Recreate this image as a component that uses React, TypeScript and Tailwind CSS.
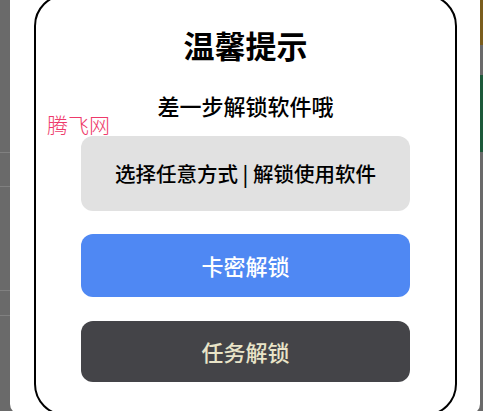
import * as React from "react";

const cjk = { fontFamily: '"Noto Sans CJK SC", "Noto Sans", sans-serif' };

function LeftEdge() {
  return (
    <div className="flex w-[10px] shrink-0 flex-col bg-[#6a6a6a]">
      <div className="h-[153px] border-b border-[#808080]" />
      <div className="h-[34px] border-b border-[#808080]" />
      <div className="h-[104px] border-b border-[#808080]" />
      <div className="h-[25px] border-b border-[#808080]" />
    </div>
  );
}

function RightEdge() {
  return (
    <div className="flex w-[3px] shrink-0 flex-col bg-[#6a6a6a]">
      <div className="h-[45px] bg-[#7a5d1c]" />
      <div className="h-[30px]" />
      <div className="h-[77px] bg-[#1d5a3a]" />
    </div>
  );
}

export default function App() {
  return (
    <div
      className="relative flex h-[411px] w-[483px] overflow-hidden bg-[#6a6a6a]"
      style={cjk}
    >
      <LeftEdge />

      {/* Sheet */}
      <div className="flex h-[414px] flex-1 justify-center rounded-b-[10px] bg-white pl-[24px] pr-[23px]">
        <div className="mt-[-6px] flex h-[422px] w-full flex-col items-center rounded-[32px] border-2 border-black px-[45px] pt-[34px]">
          <h1 className="h-[30px] text-[31px] font-bold leading-[30px] text-black">
            温馨提示
          </h1>
          <p className="mt-[34px] h-[22px] text-[22px] font-medium leading-[22px] text-black">
            差一步解锁软件哦
          </p>

          <div className="mt-[20px] flex h-[75px] w-full items-center justify-center rounded-[12px] bg-[#e1e1e1] text-[20.5px] font-medium text-black">
            选择任意方式 | 解锁使用软件
          </div>

          <button className="mt-[23px] flex h-[63px] w-full items-center justify-center rounded-[12px] bg-[#4f88f3] text-[22px] font-medium text-white">
            卡密解锁
          </button>

          <button className="mt-[24px] flex h-[61px] w-full items-center justify-center rounded-[12px] bg-[#444448] text-[22px] font-medium text-[#e9e4c8]">
            任务解锁
          </button>
        </div>
      </div>

      <RightEdge />

      {/* watermark */}
      <span className="absolute left-[47px] top-[112px] text-[21px] font-light leading-[24px] text-[#ee3a6a]">
        腾飞网
      </span>
    </div>
  );
}
